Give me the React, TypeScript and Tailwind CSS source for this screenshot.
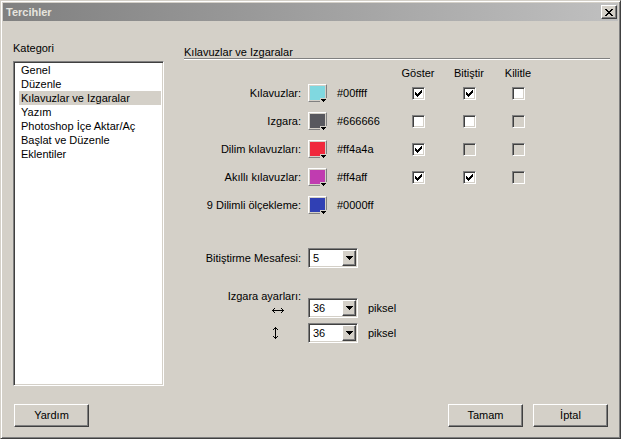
import React from 'react'

const raised =
  'border border-t-white border-l-white border-r-[#404040] border-b-[#404040] shadow-[inset_-1px_-1px_0_#808080] bg-[#d4d0c8]'
const sunken =
  'border border-t-[#808080] border-l-[#808080] border-r-white border-b-white shadow-[inset_1px_1px_0_#404040,inset_-1px_-1px_0_#d4d0c8]'

const categories = [
  'Genel',
  'Düzenle',
  'Kılavuzlar ve Izgaralar',
  'Yazım',
  'Photoshop İçe Aktar/Aç',
  'Başlat ve Düzenle',
  'Eklentiler',
]

// state per row: [göster, bitiştir, kilitle] — null = no box
type Box = { checked: boolean; disabled?: boolean } | null

const rows: { label: string; swatch: string; hex: string; boxes: Box[] }[] = [
  {
    label: 'Kılavuzlar:',
    swatch: 'bg-[#80d8e0]',
    hex: '#00ffff',
    boxes: [{ checked: true }, { checked: true }, { checked: false }],
  },
  {
    label: 'Izgara:',
    swatch: 'bg-[#58585e]',
    hex: '#666666',
    boxes: [{ checked: false }, { checked: false }, { checked: false, disabled: true }],
  },
  {
    label: 'Dilim kılavuzları:',
    swatch: 'bg-[#f0283c]',
    hex: '#ff4a4a',
    boxes: [{ checked: true }, { checked: false, disabled: true }, { checked: false, disabled: true }],
  },
  {
    label: 'Akıllı kılavuzlar:',
    swatch: 'bg-[#c03cb0]',
    hex: '#ff4aff',
    boxes: [{ checked: true }, { checked: true }, { checked: false, disabled: true }],
  },
  {
    label: '9 Dilimli ölçekleme:',
    swatch: 'bg-[#3040b4]',
    hex: '#0000ff',
    boxes: [null, null, null],
  },
]

function Check({ checked, disabled }: { checked: boolean; disabled?: boolean }) {
  return (
    <div className={`relative h-[13px] w-[13px] ${sunken} ${disabled ? 'bg-[#d4d0c8]' : 'bg-white'}`}>
      {checked && (
        <svg className="absolute left-[2px] top-[2px]" width="7" height="7" viewBox="0 0 7 7" shapeRendering="crispEdges">
          {[2, 3, 4, 3, 2, 1, 0].map((y, x) => (
            <rect key={x} x={x} y={y} width="1" height="3" fill="#000" />
          ))}
        </svg>
      )}
    </div>
  )
}

function Swatch({ color }: { color: string }) {
  return (
    <div className="relative h-[18px] w-[19px] border border-t-white border-l-white border-r-[#808080] border-b-[#808080] bg-[#d4d0c8] p-[1px]">
      <div className={`h-full w-full ${color}`} />
      {/* little drop arrow in the corner */}
      <svg className="absolute -right-[1px] -bottom-[2px]" width="7" height="5" viewBox="0 0 7 5" shapeRendering="crispEdges">
        <rect x="0" y="0" width="7" height="5" fill="#d4d0c8" />
        <path d="M1 1h5v1H1zM2 2h3v1H2zM3 3h1v1H3z" fill="#000" />
      </svg>
    </div>
  )
}

function Combo({ value }: { value: string }) {
  return (
    <div className={`flex h-[20px] w-[50px] p-[1px] ${sunken}`}>
      <div className="flex flex-1 items-center bg-white pl-[3px]">{value}</div>
      <div className={`flex w-[14px] items-center justify-center ${raised}`}>
        <svg width="7" height="4" viewBox="0 0 7 4" shapeRendering="crispEdges">
          <path d="M0 0h7v1H0zM1 1h5v1H1zM2 2h3v1H2zM3 3h1v1H3z" fill="#000" />
        </svg>
      </div>
    </div>
  )
}

function Button({ children }: { children: React.ReactNode }) {
  return (
    <div className={`flex h-[23px] w-[75px] items-center justify-center ${raised}`}>{children}</div>
  )
}

export default function App() {
  return (
    <div className="h-[439px] w-[621px] border border-t-[#d4d0c8] border-l-[#d4d0c8] border-r-[#404040] border-b-[#404040] bg-[#d4d0c8] p-[2px] font-['Liberation_Sans',Arial,sans-serif] text-[11px] leading-[13px] text-black shadow-[inset_1px_1px_0_#fff,inset_-1px_-1px_0_#808080]">
      {/* title bar */}
      <div className="flex h-[18px] items-center justify-between bg-gradient-to-r from-[#808080] to-[#c0c0c0] pl-[3px] pr-[1px]">
        <span className="font-bold text-[#e6e4de]">Tercihler</span>
        <div className={`flex h-[14px] w-[16px] items-center justify-center ${raised}`}>
          <svg width="8" height="7" viewBox="0 0 8 7" shapeRendering="crispEdges">
            <path d="M0 0h2v1H0zM6 0h2v1H6zM1 1h2v1H1zM5 1h2v1H5zM2 2h4v1H2zM3 3h2v1H3zM2 4h4v1H2zM1 5h2v1H1zM5 5h2v1H5zM0 6h2v1H0zM6 6h2v1H6z" fill="#000" />
          </svg>
        </div>
      </div>

      <div className="flex">
        {/* left: category list */}
        <div className="ml-[10px] mt-[20px] flex w-[151px] flex-col">
          <div className="h-[14px] leading-[14px]">Kategori</div>
          <div className={`mt-[6px] h-[325px] bg-white ${sunken} p-[1px]`}>
            {categories.map((c, i) => (
              <div
                key={c}
                className={`ml-[4px] mr-[1px] h-[14px] pl-[2px] leading-[14px] ${i === 2 ? 'bg-[#d4d0c8]' : ''}`}
              >
                {c}
              </div>
            ))}
          </div>
        </div>

        {/* right: settings */}
        <div className="ml-[20px] mt-[25px] w-[426px]">
          <div className="h-[12px] leading-[12px]">Kılavuzlar ve Izgaralar</div>
          <div className="h-[2px] border-t border-t-[#808080] border-b border-b-white" />

          <div className="mt-[7px] flex h-[13px]">
            <div className="w-[216px]" />
            <div className="w-[36px] text-center">Göster</div>
            <div className="w-[66px] text-center">Bitiştir</div>
            <div className="w-[32px] text-center">Kilitle</div>
          </div>

          <div className="mt-[4px] flex flex-col gap-[10px]">
            {rows.map((r) => (
              <div key={r.label} className="flex h-[18px] items-center">
                <div className="w-[117px] text-right">{r.label}</div>
                <div className="ml-[7px]">
                  <Swatch color={r.swatch} />
                </div>
                <div className="ml-[10px] w-[63px]">{r.hex}</div>
                {r.boxes.map((b, j) => (
                  <div
                    key={j}
                    className={`flex justify-center ${j === 0 ? 'w-[36px]' : j === 1 ? 'w-[66px]' : 'w-[32px]'}`}
                  >
                    {b && <Check checked={b.checked} disabled={b.disabled} />}
                  </div>
                ))}
              </div>
            ))}
          </div>

          <div className="mt-[34px] flex items-center">
            <div className="w-[117px] text-right">Bitiştirme Mesafesi:</div>
            <div className="ml-[7px]">
              <Combo value="5" />
            </div>
          </div>

          <div className="mt-[22px] flex items-end">
            <div className="flex w-[117px] flex-col">
              <div className="text-right">Izgara ayarları:</div>
              <div className="flex h-[15px] items-center justify-end pr-[17px]">
                {/* horizontal double arrow */}
                <svg width="12" height="5" viewBox="0 0 12 5" shapeRendering="crispEdges">
                  <path d="M0 2h12v1H0zM1 1h1v1H1zM1 3h1v1H1zM2 0h1v1H2zM2 4h1v1H2zM10 1h1v1h-1zM10 3h1v1h-1zM9 0h1v1H9zM9 4h1v1H9z" fill="#000" />
                </svg>
              </div>
            </div>
            <div className="ml-[7px]">
              <Combo value="36" />
            </div>
            <div className="ml-[10px] self-center pt-[8px]">piksel</div>
          </div>

          <div className="mt-[5px] flex items-center">
            <div className="flex w-[117px] justify-end pr-[23px]">
              {/* vertical double arrow */}
              <svg width="5" height="12" viewBox="0 0 5 12" shapeRendering="crispEdges">
                <path d="M2 0h1v12H2zM1 1h1v1H1zM3 1h1v1H3zM0 2h1v1H0zM4 2h1v1H4zM1 10h1v1H1zM3 10h1v1H3zM0 9h1v1H0zM4 9h1v1H4z" fill="#000" />
              </svg>
            </div>
            <div className="ml-[7px]">
              <Combo value="36" />
            </div>
            <div className="ml-[10px]">piksel</div>
          </div>
        </div>
      </div>

      {/* buttons */}
      <div className="mt-[18px] flex items-center pl-[11px] pr-[10px]">
        <Button>Yardım</Button>
        <div className="flex-1" />
        <Button>Tamam</Button>
        <div className="ml-[10px]">
          <Button>İptal</Button>
        </div>
      </div>
    </div>
  )
}
